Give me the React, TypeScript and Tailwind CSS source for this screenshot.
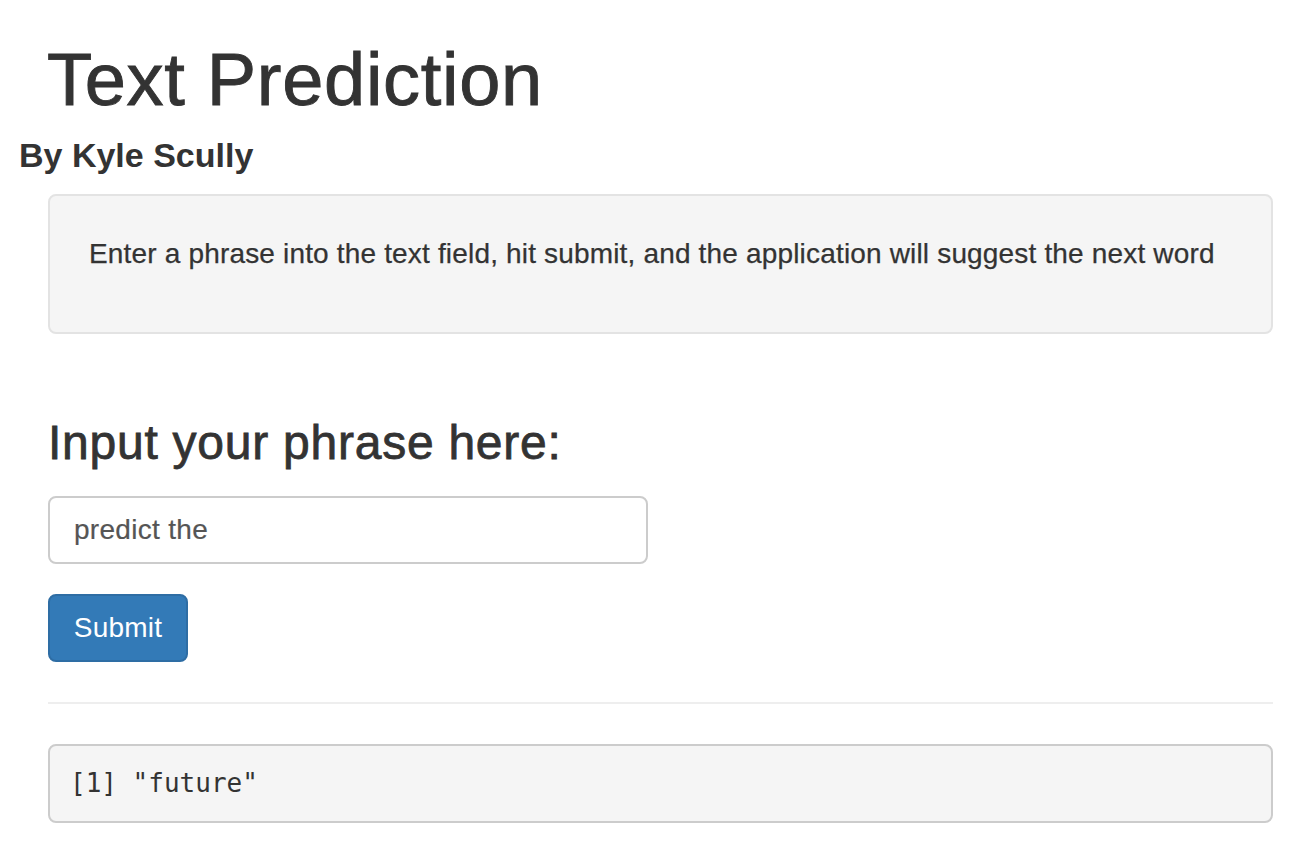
import React from "react";

export default function App() {
  return (
    <div className="min-h-screen bg-white text-[#333] font-['Liberation_Sans',Arial,sans-serif]">
      <h1 className="ml-[47px] pt-[40px] text-[74px] leading-[79px] font-normal tracking-[0.7px] [-webkit-text-stroke:0.9px_#333]">Text Prediction</h1>
      <h4 className="ml-[19px] mt-[16px] text-[34px] leading-[40px] font-bold">By Kyle Scully</h4>
      <div className="ml-[48px] mr-[21px]">
        <div className="mt-[19px] rounded-[8px] border-2 border-[#e3e3e3] bg-[#f5f5f5] pl-[39px] pr-[38px] pt-[38px] pb-[58px]">
          <p className="text-[28px] leading-[40px] tracking-[0.17px] [-webkit-text-stroke:0.25px_#333]">
            Enter a phrase into the text field, hit submit, and the application will suggest the next word
          </p>
        </div>
        <h3 className="mt-[82px] text-[48px] leading-[53px] font-normal tracking-[0.75px] [-webkit-text-stroke:0.8px_#333]">Input your phrase here:</h3>
        <div className="mt-[27px] flex h-[68px] w-[600px] items-center rounded-[8px] border-2 border-[#ccc] bg-white pl-[24px] text-[28px] tracking-[0.3px] text-[#555] [-webkit-text-stroke:0.2px_#555]">
          predict the
        </div>
        <button className="mt-[30px] flex h-[68px] w-[140px] items-center justify-center rounded-[8px] border-2 border-[#2e6da4] bg-[#337ab7] text-[28px] tracking-[0.2px] text-white">
          Submit
        </button>
        <div className="mt-[40px] h-[2px] bg-[#eee]" />
        <pre className="mt-[40px] rounded-[8px] border-2 border-[#ccc] bg-[#f5f5f5] px-[20px] py-[19px] text-[26px] leading-[37px] font-['DejaVu_Sans_Mono',monospace] text-[#333]">[1] "future"</pre>
      </div>
    </div>
  );
}
